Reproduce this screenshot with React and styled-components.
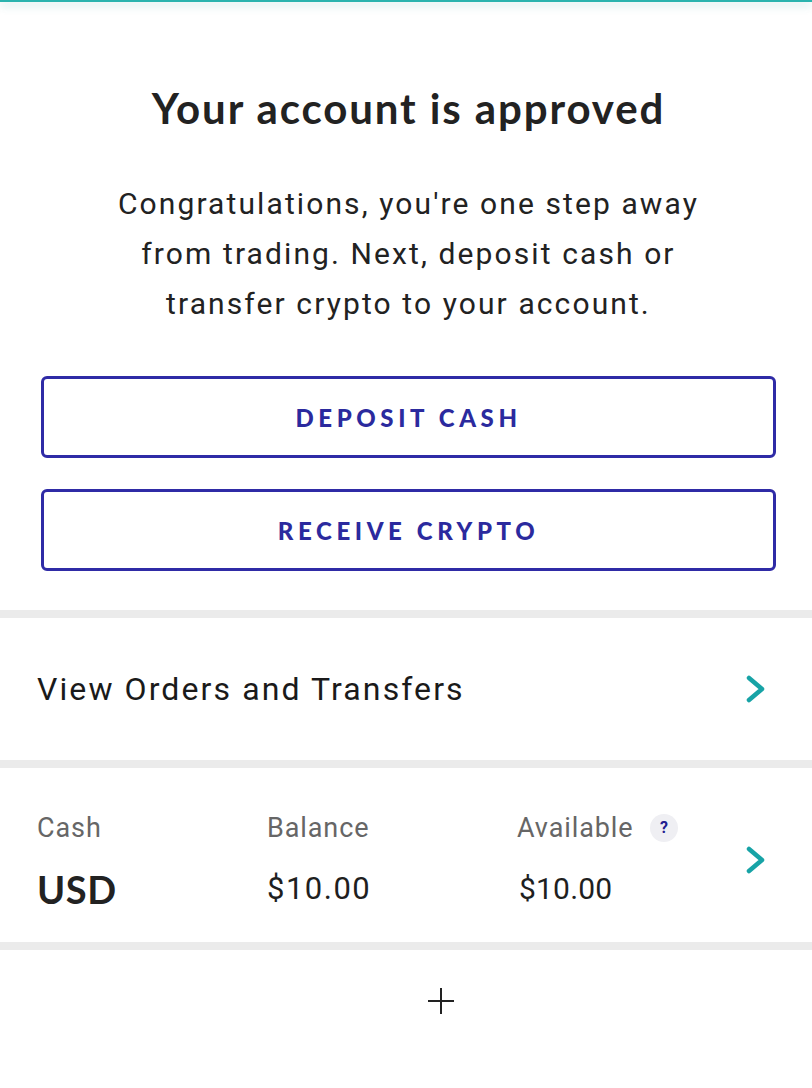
import React from 'react';
import styled, { createGlobalStyle } from 'styled-components';

const GlobalStyle = createGlobalStyle`
  html, body {
    margin: 0;
    padding: 0;
    background: #fff;
  }
  body {
    font-family: Roboto, "Liberation Sans", sans-serif;
    color: #222;
  }
`;

const Page = styled.div`
  width: 812px;
  min-height: 1088px;
  background: #fff;
  overflow: hidden;
`;

const TopBar = styled.div`
  height: 2px;
  background: #2bb3ae;
  box-shadow: 0 3px 8px rgba(60, 160, 160, 0.45);
  position: relative;
  z-index: 1;
`;

const Hero = styled.section`
  display: flex;
  flex-direction: column;
  align-items: center;
  padding: 82px 36px 39px 41px;
`;

const Title = styled.h1`
  margin: 0;
  font-family: Lato, "Liberation Sans", sans-serif;
  font-weight: 700;
  font-size: 42px;
  line-height: 48px;
  letter-spacing: 1.9px;
  color: #222;
`;

const Intro = styled.p`
  margin: 47px 0 0;
  font-size: 30px;
  line-height: 50px;
  text-align: center;
  letter-spacing: 2.1px;
  color: #222;
`;

const Actions = styled.div`
  display: flex;
  flex-direction: column;
  gap: 31px;
  width: 100%;
  margin-top: 47px;
`;

const OutlineButton = styled.button`
  height: 82px;
  width: 100%;
  border: 3px solid #2f2ba6;
  border-radius: 6px;
  background: #fff;
  color: #2b2a9e;
  font-family: Lato, "Liberation Sans", sans-serif;
  font-weight: 900;
  font-size: 24px;
  letter-spacing: 4.6px;
  text-transform: uppercase;
`;

const Divider = styled.div`
  height: 8px;
  background: #ebebeb;
`;

const LinkRow = styled.div`
  display: flex;
  align-items: center;
  justify-content: space-between;
  height: 142px;
  padding: 0 44px 0 37px;
`;

const LinkText = styled.span`
  font-size: 32px;
  font-weight: 400;
  letter-spacing: 2.1px;
  color: #1a1a1a;
`;

const BalanceRow = styled.div`
  display: grid;
  grid-template-columns: 230px 250px 1fr auto;
  align-items: center;
  align-content: start;
  height: 174px;
  padding: 43px 44px 0 37px;
  box-sizing: border-box;
  row-gap: 24px;
`;

const Label = styled.div`
  display: flex;
  align-items: center;
  gap: 17px;
  font-size: 27px;
  letter-spacing: 0.9px;
  color: #666;
  line-height: 34px;
`;

const Help = styled.span`
  display: inline-flex;
  align-items: center;
  justify-content: center;
  width: 28px;
  height: 28px;
  border-radius: 50%;
  background: #efeff3;
  color: #23208f;
  font-size: 16px;
  font-weight: 700;
`;

const Currency = styled.div`
  font-family: Lato, "Liberation Sans", sans-serif;
  font-weight: 700;
  font-size: 38px;
  letter-spacing: 0.6px;
  color: #222;
  line-height: 40px;
`;

const Amount = styled.div`
  font-size: ${(p) => (p.$compact ? '30px' : '31px')};
  font-weight: 400;
  letter-spacing: ${(p) => (p.$compact ? '0.2px' : '1.5px')};
  color: #1f1f1f;
  line-height: 40px;
  margin-left: ${(p) => (p.$compact ? '2px' : '0')};
`;

const ChevronCell = styled.div`
  grid-column: 4;
  grid-row: 1 / span 2;
  display: flex;
  align-items: center;
`;

const AddArea = styled.div`
  display: flex;
  justify-content: center;
  padding: 37px 0 0 70px;
`;

const Chevron = () => (
  <svg width="24" height="28" viewBox="0 0 24 28" fill="none">
    <path d="M5 3 L18 14 L5 25" stroke="#17a3a6" strokeWidth="4.5" strokeLinecap="round" strokeLinejoin="round" />
  </svg>
);

const Plus = () => (
  <svg width="28" height="28" viewBox="0 0 28 28">
    <path d="M14 1 V27 M1 14 H27" stroke="#222" strokeWidth="2" />
  </svg>
);

const App = () => {
  return (
    <Page>
      <GlobalStyle />
      <TopBar />
      <Hero>
        <Title>Your account is approved</Title>
        <Intro>
          Congratulations, you're one step away<br />
          from trading. Next, deposit cash or<br />
          transfer crypto to your account.
        </Intro>
        <Actions>
          <OutlineButton>Deposit Cash</OutlineButton>
          <OutlineButton>Receive Crypto</OutlineButton>
        </Actions>
      </Hero>
      <Divider />
      <LinkRow>
        <LinkText>View Orders and Transfers</LinkText>
        <Chevron />
      </LinkRow>
      <Divider />
      <BalanceRow>
        <Label>Cash</Label>
        <Label>Balance</Label>
        <Label>Available <Help>?</Help></Label>
        <ChevronCell><Chevron /></ChevronCell>
        <Currency>USD</Currency>
        <Amount>$10.00</Amount>
        <Amount $compact>$10.00</Amount>
      </BalanceRow>
      <Divider />
      <AddArea>
        <Plus />
      </AddArea>
    </Page>
  );
};

export default App;
